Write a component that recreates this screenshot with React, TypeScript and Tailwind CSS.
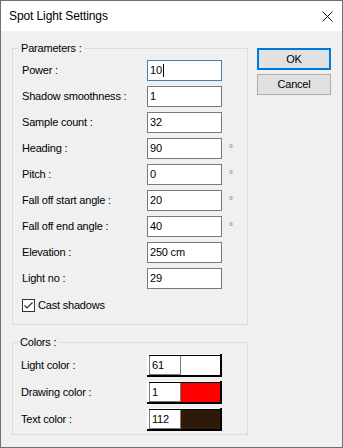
import { FunctionComponent } from "react";

const params = [
	{ label: "Power :", value: "10", focus: true },
	{ label: "Shadow smoothness :", value: "1" },
	{ label: "Sample count :", value: "32" },
	{ label: "Heading :", value: "90", deg: true },
	{ label: "Pitch :", value: "0", deg: true },
	{ label: "Fall off start angle :", value: "20", deg: true },
	{ label: "Fall off end angle :", value: "40", deg: true },
	{ label: "Elevation :", value: "250 cm" },
	{ label: "Light no :", value: "29" },
];

const colors = [
	{ label: "Light color :", value: "61", swatch: "bg-white" },
	{ label: "Drawing color :", value: "1", swatch: "bg-[#ff0000]" },
	{ label: "Text color :", value: "112", swatch: "bg-[#2d1a08]" },
];

const App: FunctionComponent = () => {
	return (
		<div className="w-[343px] h-[448px] border border-[#6f6f6f] flex flex-col bg-[#f0f0f0] text-black font-['Liberation_Sans',Arial,sans-serif] text-[11px] tracking-[-0.2px]">
			{/* title bar */}
			<div className="h-[30px] bg-white flex items-center justify-between pl-[8px] pr-[9px]">
				<span className="text-[12px] tracking-[-0.1px]">Spot Light Settings</span>
				<svg width="11" height="11" viewBox="0 0 11 11">
					<path d="M0.5 0.5 L10.5 10.5 M10.5 0.5 L0.5 10.5" stroke="#111" strokeWidth="1" fill="none" />
				</svg>
			</div>

			<div className="flex-1 flex pl-[11px] pt-[10px]">
				<div className="w-[236px] flex flex-col">
					<fieldset className="border border-[#dcdcdc] pl-[9px] pb-[12px]">
						<legend className="ml-[-3px] px-[2px] leading-[14px]">Parameters :</legend>
						<div className="mt-[5px] flex flex-col gap-[5px]">
							{params.map((p) => (
								<div key={p.label} className="flex items-center h-[21px]">
									<span className="w-[125px]">{p.label}</span>
									<div
										className={`w-[75px] h-[21px] bg-white border flex items-center pl-[2px] ${p.focus ? "border-[#4f7cac]" : "border-[#7a7a7a]"}`}
									>
										{p.value}
										{p.focus && <span className="w-px h-[13px] bg-black ml-px" />}
									</div>
									{p.deg && <span className="ml-[7px] text-[10px] text-[#7a7a7a]">°</span>}
								</div>
							))}
						</div>
						<div className="mt-[10px] flex items-center h-[13px]">
							<div className="w-[13px] h-[13px] bg-white border border-[#333] flex items-center justify-center">
								<svg width="11" height="11" viewBox="0 0 11 11">
									<path d="M1.5 5.5 L4 8 L9.5 2.5" stroke="#333" strokeWidth="1.2" fill="none" />
								</svg>
							</div>
							<span className="ml-[3px]">Cast shadows</span>
						</div>
					</fieldset>

					<fieldset className="mt-[10px] border border-[#dcdcdc] pl-[8px] pb-[3px]">
						<legend className="ml-[-3px] px-[2px] leading-[14px]">Colors :</legend>
						<div className="mt-[5px] flex flex-col gap-[4px]">
							{colors.map((c) => (
								<div key={c.label} className="flex items-center h-[23px]">
									<span className="w-[126px]">{c.label}</span>
									<div className="w-[75px] h-[23px] bg-white border-r-2 border-b-2 border-black pl-[2px] pt-px flex">
										<div className="flex-1 flex border-t border-black">
											<div className="w-[32px] bg-white border-l border-b border-r border-[#7a7a7a] flex items-center pl-[2px]">
												{c.value}
											</div>
											<div className={`flex-1 ${c.swatch}`} />
										</div>
									</div>
								</div>
							))}
						</div>
					</fieldset>
				</div>

				<div className="ml-[9px] mt-[7px] flex flex-col gap-[4px]">
					<button className="w-[74px] h-[22px] bg-[#e1e1e1] border-2 border-[#0078d7] flex items-center justify-center">OK</button>
					<button className="w-[74px] h-[21px] bg-[#e1e1e1] border border-[#adadad] flex items-center justify-center">Cancel</button>
				</div>
			</div>
		</div>
	);
};

export default App;
